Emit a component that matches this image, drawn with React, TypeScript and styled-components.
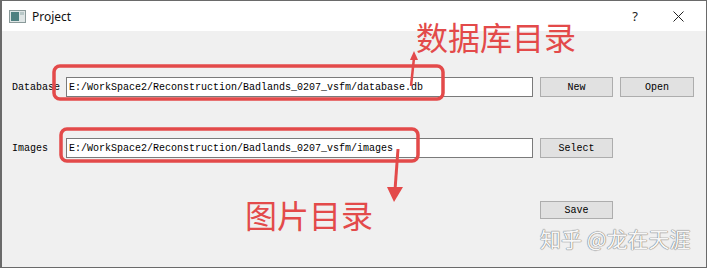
import React from "react";
import styled, { createGlobalStyle } from "styled-components";

const Global = createGlobalStyle`
  html, body { margin: 0; padding: 0; background: #f0f0f0; }
  #root { width: 707px; height: 268px; }
`;

const RED = "#e34a4a";

const Frame = styled.div`
  position: relative;
  box-sizing: border-box;
  width: 707px;
  height: 268px;
  border: 1px solid #6a6a6a;
  border-left-width: 2px;
  background: #f0f0f0;
  display: flex;
  flex-direction: column;
  overflow: hidden;
`;

const TitleBar = styled.div`
  height: 30px;
  background: #ffffff;
  display: flex;
  align-items: center;
  padding-left: 7px;
  font-family: "Noto Sans", "Noto Sans CJK SC", sans-serif;
  font-size: 12px;
  color: #111;
  flex-shrink: 0;
`;

const TitleText = styled.span`
  margin-left: 6px;
  flex: 1;
`;

const TitleButton = styled.span<{ $w: number }>`
  width: ${(p) => p.$w}px;
  display: flex;
  justify-content: center;
  align-items: center;
  font-size: 13px;
  color: #222;
`;

const Content = styled.div`
  flex: 1;
  display: grid;
  grid-template-columns: 47px 467px 73px 74px;
  grid-template-rows: 20px 20px 20px;
  column-gap: 7px;
  row-gap: 41px;
  align-content: start;
  padding: 46px 0 0 10px;
  font-family: "Liberation Mono", monospace;
  font-size: 10px;
  color: #000;
`;

const Label = styled.div`
  display: flex;
  align-items: center;
`;

const PathInput = styled.div`
  box-sizing: border-box;
  background: #fff;
  border: 1px solid #7a7a7a;
  display: flex;
  align-items: center;
  padding: 1px 0 0 2px;
  white-space: nowrap;
  overflow: hidden;
`;

const Button = styled.div<{ $row?: number }>`
  box-sizing: border-box;
  background: #e1e1e1;
  border: 1px solid #adadad;
  display: flex;
  align-items: center;
  justify-content: center;
  padding-top: 1px;
  grid-column: ${(p) => (p.$row === 3 ? "3" : "auto")};
  margin-top: ${(p) => (p.$row === 3 ? 2 : 0)}px;
`;

const Spacer = styled.div``;

const Overlay = styled.svg`
  position: absolute;
  left: -2px;
  top: -1px;
  pointer-events: none;
`;

const Callout = styled.div<{ $x: number; $y: number }>`
  position: absolute;
  left: ${(p) => p.$x}px;
  top: ${(p) => p.$y}px;
  font-family: "Noto Sans CJK SC", sans-serif;
  font-size: 32px;
  line-height: 1;
  color: ${RED};
`;

const Watermark = styled.div`
  position: absolute;
  left: 538px;
  top: 227px;
  font-family: "Noto Sans CJK SC", sans-serif;
  font-size: 21px;
  line-height: 1;
  color: rgba(255, 255, 255, 0.95);
  text-shadow: 0 0 1px #808080, 0 0 1px #808080, 0 0 1px #909090;
  white-space: nowrap;
`;

function AppIcon() {
  return (
    <svg width="17" height="13" viewBox="0 0 17 13">
      <rect x="0.5" y="0.5" width="16" height="12" fill="#dfe6e6" stroke="#8a9a9a" />
      <rect x="2" y="2" width="8" height="9" fill="#4f8080" />
      <rect x="11" y="2" width="4" height="3" fill="#b8c8c8" />
    </svg>
  );
}

function CloseIcon() {
  return (
    <svg width="11" height="11" viewBox="0 0 11 11">
      <path d="M0.5 0.5 L10.5 10.5 M10.5 0.5 L0.5 10.5" stroke="#222" strokeWidth="1" />
    </svg>
  );
}

export default function App() {
  return (
    <>
      <Global />
      <Frame>
        <TitleBar>
          <AppIcon />
          <TitleText>Project</TitleText>
          <TitleButton $w={30}>?</TitleButton>
          <TitleButton $w={56}>
            <CloseIcon />
          </TitleButton>
        </TitleBar>
        <Content>
          <Label>Database</Label>
          <PathInput>E:/WorkSpace2/Reconstruction/Badlands_0207_vsfm/database.db</PathInput>
          <Button>New</Button>
          <Button>Open</Button>

          <Label>Images</Label>
          <PathInput>E:/WorkSpace2/Reconstruction/Badlands_0207_vsfm/images</PathInput>
          <Button>Select</Button>
          <Spacer />

          <Button $row={3}>Save</Button>
        </Content>

        <Overlay width="707" height="268" viewBox="0 0 707 268">
          <rect x="54" y="66" width="389" height="33" rx="6" fill="none" stroke={RED} strokeWidth="3.5" />
          <rect x="61" y="129" width="357" height="32" rx="6" fill="none" stroke={RED} strokeWidth="3.5" />
          <line x1="411" y1="86" x2="414" y2="58" stroke={RED} strokeWidth="2.5" />
          <polygon points="410,60 414,51 418,60" fill={RED} />
          <line x1="398" y1="149" x2="395" y2="190" stroke={RED} strokeWidth="3" />
          <polygon points="387,187 403,187 394,202" fill={RED} />
        </Overlay>
        <Callout $x={414} $y={19}>数据库目录</Callout>
        <Callout $x={243} $y={197}>图片目录</Callout>
        <Watermark>知乎 @龙在天涯</Watermark>
      </Frame>
    </>
  );
}
